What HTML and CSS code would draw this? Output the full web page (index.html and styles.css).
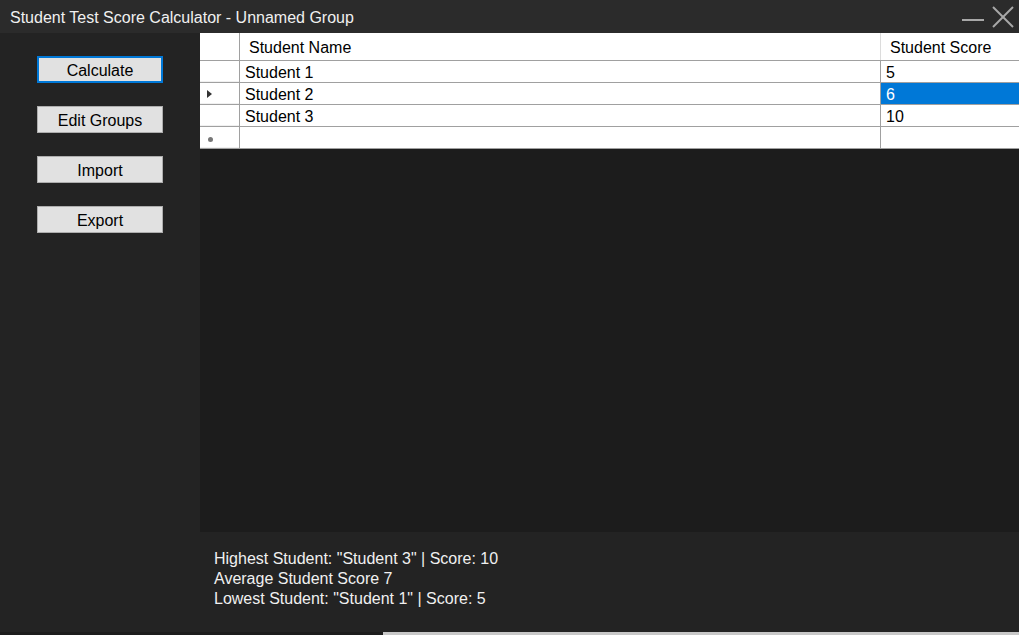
FILE: index.html
```html
<!DOCTYPE html>
<html>
<head>
<meta charset="utf-8">
<link rel="stylesheet" href="styles.css">
</head>
<body>
<div class="window">
  <div class="titlebar">
    <div class="title">Student Test Score Calculator - Unnamed Group</div>
    <div class="controls">
      <svg class="ctl" width="24" height="24" viewBox="0 0 24 24"><line x1="1" y1="15" x2="23" y2="15" stroke="#a8a8a8" stroke-width="2"/></svg>
      <svg class="ctl" width="24" height="24" viewBox="0 0 24 24"><line x1="2" y1="2" x2="22" y2="22" stroke="#a8a8a8" stroke-width="2"/><line x1="22" y1="2" x2="2" y2="22" stroke="#a8a8a8" stroke-width="2"/></svg>
    </div>
  </div>
  <div class="body">
    <div class="sidebar">
      <button class="btn focused">Calculate</button>
      <button class="btn">Edit Groups</button>
      <button class="btn">Import</button>
      <button class="btn">Export</button>
    </div>
    <div class="main">
      <div class="gridarea">
        <div class="grid">
          <div class="row head">
            <div class="rh"></div>
            <div class="c name">Student Name</div>
            <div class="c score">Student Score</div>
          </div>
          <div class="row">
            <div class="rh"></div>
            <div class="c name">Student 1</div>
            <div class="c score">5</div>
          </div>
          <div class="row">
            <div class="rh"><span class="tri"></span></div>
            <div class="c name">Student 2</div>
            <div class="c score sel">6</div>
          </div>
          <div class="row">
            <div class="rh"></div>
            <div class="c name">Student 3</div>
            <div class="c score">10</div>
          </div>
          <div class="row last">
            <div class="rh"><span class="star"></span></div>
            <div class="c name"></div>
            <div class="c score"></div>
          </div>
        </div>
      </div>
      <div class="results">
        <div>Highest Student: "Student 3" | Score: 10</div>
        <div>Average Student Score 7</div>
        <div>Lowest Student: "Student 1" | Score: 5</div>
      </div>
    </div>
  </div>
  <div class="bottomstrip"><div class="dark"></div><div class="light"></div></div>
</div>
</body>
</html>
```
FILE: styles.css
```css
html, body {
  margin: 0;
  padding: 0;
  background: #232323;
}
body {
  font-family: "Liberation Sans", Arial, sans-serif;
  font-size: 16px;
  width: 1019px;
  height: 635px;
  overflow: hidden;
}
.window {
  display: flex;
  flex-direction: column;
  height: 635px;
}
.titlebar {
  height: 33px;
  background: #2b2b2b;
  display: flex;
  align-items: center;
  justify-content: space-between;
  flex-shrink: 0;
}
.title {
  color: #f0f0f0;
  padding-left: 10px;
  font-size: 16px;
  padding-top: 2px;
}
.controls {
  display: flex;
  gap: 6px;
  padding-right: 4px;
  align-items: center;
}
.ctl { display: block; }
.body {
  display: flex;
  flex: 1;
  min-height: 0;
}
.sidebar {
  width: 200px;
  flex-shrink: 0;
  background: #232323;
  display: flex;
  flex-direction: column;
  align-items: flex-start;
  padding-top: 23px;
  padding-left: 37px;
  box-sizing: border-box;
  gap: 23px;
}
.btn {
  width: 126px;
  height: 27px;
  background: #e1e1e1;
  border: 1px solid #adadad;
  font-family: "Liberation Sans", Arial, sans-serif;
  font-size: 16px;
  color: #000;
  padding: 2px 0 0 0;
  margin: 0;
  box-sizing: border-box;
}
.btn.focused {
  border: 2px solid #0078d7;
}
.main {
  flex: 1;
  display: flex;
  flex-direction: column;
}
.gridarea {
  height: 499px;
  background: #1c1c1c;
}
.grid {
  background: #fff;
}
.row {
  display: flex;
  height: 22px;
  box-sizing: border-box;
  border-bottom: 1px solid #a0a0a0;
}
.row.head {
  height: 28px;
}
.rh {
  width: 40px;
  flex-shrink: 0;
  border-right: 1px solid #a0a0a0;
  box-sizing: border-box;
  display: flex;
  align-items: center;
  padding-left: 7px;
}
.row:not(.head) .rh { box-shadow: inset 0 -1px 0 #f0f0f0; }
.c {
  box-sizing: border-box;
  display: flex;
  align-items: center;
  color: #000;
  padding-top: 2px;
}
.name {
  width: 641px;
  border-right: 1px solid #a0a0a0;
  padding-left: 5px;
}
.head .name { padding-left: 9px; border-right: 1px solid #dcdcdc; padding-top: 2px; }
.score {
  flex: 1;
  padding-left: 5px;
}
.head .score { padding-left: 9px; padding-top: 2px; }
.sel {
  background: #0078d7;
  color: #fff;
}
.tri {
  width: 0;
  height: 0;
  border-top: 4px solid transparent;
  border-bottom: 4px solid transparent;
  border-left: 5px solid #333;
}
.star {
  width: 5px;
  height: 5px;
  border-radius: 50%;
  background: #777;
  margin-top: 4px;
  margin-left: 1px;
}
.results {
  flex: 1;
  background: #232323;
  color: #f0f0f0;
  padding-top: 17px;
  padding-left: 14px;
  line-height: 20px;
}
.bottomstrip {
  height: 3px;
  display: flex;
  flex-shrink: 0;
}
.bottomstrip .dark { width: 383px; background: #1c1c1c; }
.bottomstrip .light { flex: 1; background: #c8c8c8; }
```
